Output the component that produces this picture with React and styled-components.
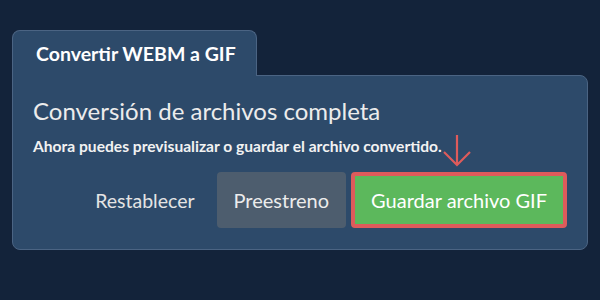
import React from "react";
import styled, { createGlobalStyle } from "styled-components";

const GlobalStyle = createGlobalStyle`
  html, body {
    margin: 0;
    padding: 0;
    background: #13233a;
    font-family: Lato, "Noto Sans", sans-serif;
  }
`

const Page = styled.div`
  width: 600px;
  height: 300px;
  box-sizing: border-box;
  padding: 30px 12px 0 12px;
`

const Tab = styled.div`
  position: relative;
  z-index: 1;
  width: 245px;
  height: 46px;
  box-sizing: border-box;
  margin-bottom: -1px;
  padding: 0 0 0 23px;
  display: flex;
  align-items: center;
  background: #2d4a6a;
  border: 1px solid #4b6483;
  border-bottom: none;
  border-radius: 8px 8px 0 0;
  color: #ffffff;
  font-size: 19.5px;
  font-weight: 700;
`

const Panel = styled.div`
  box-sizing: border-box;
  height: 175px;
  padding: 20px 20px 0 20px;
  background: #2d4a6a;
  border: 1px solid #4b6483;
  border-radius: 0 8px 8px 8px;
`

const Title = styled.h2`
  margin: 0;
  font-size: 24px;
  font-weight: 400;
  line-height: 30px;
  color: #ececec;
`

const Subtitle = styled.p`
  margin: 10px 0 0 0;
  font-size: 15.6px;
  font-weight: 700;
  line-height: 20px;
  color: #f2f2f2;
`

const Actions = styled.div`
  margin-top: 16px;
  display: flex;
  justify-content: flex-end;
  align-items: center;
`

const LinkButton = styled.button`
  background: none;
  border: none;
  padding: 0 22px 0 0;
  font-family: inherit;
  font-size: 19.5px;
  color: #e4e4e4;
  cursor: pointer;
`

const Button = styled.button`
  box-sizing: border-box;
  height: 56px;
  padding: 0 ${p => (p.$primary ? "16px" : "17px")};
  margin-left: ${p => (p.$primary ? "5px" : "0")};
  border: ${p => (p.$primary ? "4px solid #de5b5b" : "none")};
  border-radius: 4px;
  background: ${p => (p.$primary ? "#5cb85c" : "#4d5d6e")};
  color: ${p => (p.$primary ? "#ffffff" : "#ececec")};
  font-family: inherit;
  font-size: 20px;
  cursor: pointer;
`

const Highlight = styled.div`
  position: relative;
`

const Arrow = styled.svg`
  position: absolute;
  left: 50%;
  top: -39px;
  transform: translateX(-50%);
`

export default function App() {
  return (
    <>
      <GlobalStyle />
      <Page>
        <Tab>Convertir WEBM a GIF</Tab>
        <Panel>
          <Title>Conversión de archivos completa</Title>
          <Subtitle>Ahora puedes previsualizar o guardar el archivo convertido.</Subtitle>
          <Actions>
            <LinkButton>Restablecer</LinkButton>
            <Button>Preestreno</Button>
            <Highlight>
              <Button $primary>Guardar archivo GIF</Button>
              <Arrow width="30" height="36" viewBox="0 0 30 36">
                <path d="M15 2 V32 M2 19 L15 32 L28 19" fill="none" stroke="#de5b5b" strokeWidth="2.2" />
              </Arrow>
            </Highlight>
          </Actions>
        </Panel>
      </Page>
    </>
  );
}
